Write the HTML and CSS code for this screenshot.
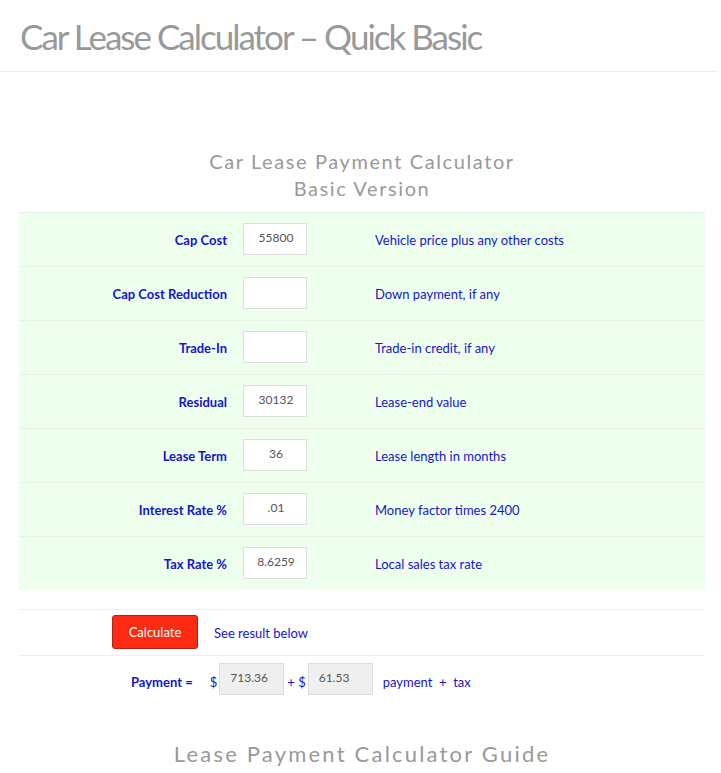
FILE: index.html
```html
<!DOCTYPE html>
<html lang="en">
<head>
  <meta charset="UTF-8" />
  <title>Car Lease Calculator – Quick Basic</title>
  <link rel="stylesheet" href="styles.css">
</head>
<body>
  <header class="page-header">
    <h1 class="page-title">Car Lease Calculator – Quick Basic</h1>
  </header>

  <main class="content">
    <h2 class="calc-title">Car Lease Payment Calculator<br>Basic Version</h2>

    <table class="calc-table">
      <tr>
        <td class="label">Cap Cost</td>
        <td class="field"><input type="text" value="55800"></td>
        <td class="hint">Vehicle price plus any other costs</td>
      </tr>
      <tr>
        <td class="label">Cap Cost Reduction</td>
        <td class="field"><input type="text" value=""></td>
        <td class="hint">Down payment, if any</td>
      </tr>
      <tr>
        <td class="label">Trade-In</td>
        <td class="field"><input type="text" value=""></td>
        <td class="hint">Trade-in credit, if any</td>
      </tr>
      <tr>
        <td class="label">Residual</td>
        <td class="field"><input type="text" value="30132"></td>
        <td class="hint">Lease-end value</td>
      </tr>
      <tr>
        <td class="label">Lease Term</td>
        <td class="field"><input type="text" value="36"></td>
        <td class="hint">Lease length in months</td>
      </tr>
      <tr>
        <td class="label">Interest Rate %</td>
        <td class="field"><input type="text" value=".01"></td>
        <td class="hint">Money factor times 2400</td>
      </tr>
      <tr>
        <td class="label">Tax Rate %</td>
        <td class="field"><input type="text" value="8.6259"></td>
        <td class="hint">Local sales tax rate</td>
      </tr>
    </table>

    <div class="action-row">
      <button class="calc-button">Calculate</button>
      <span class="note">See result below</span>
    </div>

    <div class="result-row">
      <span class="result-label">Payment =</span>
      <span class="cur">$</span>
      <input class="result-box" type="text" value="713.36" readonly>
      <span class="cur">+ $</span>
      <input class="result-box" type="text" value="61.53" readonly>
      <span class="note result-note">payment &nbsp;+ &nbsp;tax</span>
    </div>

    <h2 class="guide-title">Lease Payment Calculator Guide</h2>
  </main>
</body>
</html>
```

FILE: styles.css
```css
body {
  margin: 0;
  padding: 0;
  font-family: 'Lato', 'Open Sans', sans-serif;
  background-color: #fff;
  color: #1515c8;
}

.page-header {
  padding: 15px 20px 0 20px;
  height: 56px;
  border-bottom: 1px solid #eeeeee;
  margin-right: 3px;
}

.page-title {
  margin: 0;
  font-size: 35px;
  font-weight: 400;
  letter-spacing: -2px;
  color: #999999;
  line-height: 42px;
}

.content {
  padding: 0 16px 0 19px;
}

.calc-title {
  margin: 76px 0 0 0;
  text-align: center;
  font-size: 20px;
  font-weight: 400;
  letter-spacing: 1.6px;
  line-height: 27px;
  color: #999999;
  height: 64px;
}

.calc-table {
  width: 100%;
  border-collapse: collapse;
  background-color: #efffee;
  font-size: 13px;
}

.calc-table td {
  border-top: 1px solid #e6f2e6;
  height: 53px;
  padding: 0;
  vertical-align: middle;
}

.label {
  width: 208px;
  text-align: right;
  font-weight: 700;
  padding-right: 16px !important;
}

.field {
  width: 132px;
}

.field input {
  width: 64px;
  height: 32px;
  box-sizing: border-box;
  border: 1px solid #dddddd;
  background: #fff;
  font-family: 'Lato', sans-serif;
  font-size: 12px;
  color: #555;
  text-align: center;
  padding: 0 11px 3px 13px;
  margin-top: -2px;
  display: block;
}

.hint {
  font-weight: 400;
}

.action-row {
  margin-top: 19px;
  border-top: 1px solid #eeeeee;
  border-bottom: 1px solid #eeeeee;
  height: 45px;
  display: flex;
  align-items: center;
  padding-left: 93px;
  gap: 16px;
}

.calc-button {
  background-color: #ff2a12;
  color: #fff;
  border: 1px solid #b8200e;
  border-radius: 3px;
  width: 86px;
  height: 34px;
  font-family: 'Lato', sans-serif;
  font-size: 13px;
  padding: 0;
  margin-top: -2px;
}

.note {
  font-size: 13px;
}

.result-row {
  display: flex;
  align-items: center;
  height: 32px;
  margin-top: 7px;
  padding-left: 112px;
  font-size: 13px;
}

.result-label {
  font-weight: 700;
  margin-right: 17px;
  padding-top: 6px;
}

.cur {
  margin-right: 2px;
  padding-top: 6px;
}

.result-box {
  width: 65px;
  height: 32px;
  box-sizing: border-box;
  border: 1px solid #dddddd;
  background: #efefef;
  font-family: 'Lato', sans-serif;
  font-size: 12px;
  color: #555;
  padding: 0 0 3px 10px;
  margin-right: 3px;
}

.result-note {
  margin-left: 7px;
  padding-top: 6px;
}

.guide-title {
  margin: 45px 0 0 0;
  text-align: center;
  font-size: 22px;
  font-weight: 400;
  letter-spacing: 2.2px;
  color: #999999;
}
```
